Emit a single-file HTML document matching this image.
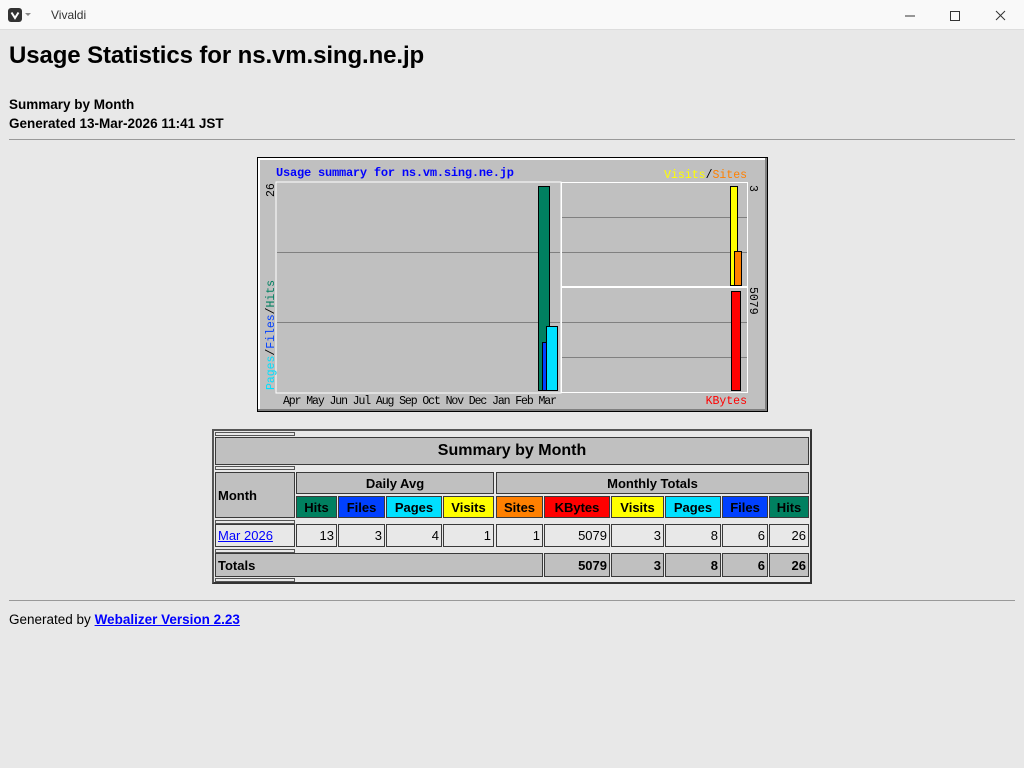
<!DOCTYPE html>
<html><head><meta charset="utf-8"><style>
*{margin:0;padding:0;box-sizing:border-box}
body{width:1024px;height:768px;background:#e8e8e8;position:relative;overflow:hidden;font-family:"Liberation Sans",sans-serif;color:#000}
.a{position:absolute}
.c{position:absolute;border:1px solid #3a3a3a;background:#c0c0c0;font-size:13px;font-weight:bold;display:flex;align-items:center;justify-content:center;white-space:nowrap}
.d{background:#e8e8e8;font-weight:normal;justify-content:flex-end;padding-right:2px}
.t{justify-content:flex-end;padding-right:2px}
.s{position:absolute;border:1px solid #555;background:#e8e8e8;height:4px}
</style></head><body>
<div class="a" style="left:0;top:0;width:1024px;height:30px;background:#f9f9f9;border-bottom:1px solid #ddd"></div>
<div class="a" style="left:8px;top:8px;width:14px;height:14px;background:#333;border-radius:3px"><svg width="14" height="14"><path d="M3.5 4.5 L7 10 L10.5 4.5" stroke="#fff" stroke-width="2" fill="none"/></svg></div>
<div class="a" style="left:25px;top:13px;border-left:3px solid transparent;border-right:3px solid transparent;border-top:3px solid #888"></div>
<div class="a" style="left:51px;top:8px;font-size:12px;color:#333">Vivaldi</div>
<svg class="a" style="left:900px;top:8px" width="110" height="16"><path d="M5 8h10" stroke="#333"/><rect x="50.5" y="3.5" width="9" height="9" fill="none" stroke="#333"/><path d="M96 3l9 9M105 3l-9 9" stroke="#333"/></svg>
<div class="a" style="left:9px;top:42px;font-size:24px;font-weight:bold;letter-spacing:-0.1px">Usage Statistics for ns.vm.sing.ne.jp</div>
<div class="a" style="left:9px;top:95px;font-size:13.5px;font-weight:bold;line-height:19px">Summary by Month<br>Generated 13-Mar-2026 11:41 JST</div>
<div class="a" style="left:9px;top:139px;width:1006px;height:1px;background:#999"></div>

<svg class="a" style="left:257px;top:157px" width="511" height="255" font-family="Liberation Mono,monospace" font-size="11">
<rect x="0" y="0" width="511" height="255" fill="#000"/>
<rect x="1" y="1" width="509" height="253" fill="#808080"/>
<rect x="1" y="1" width="507" height="251" fill="#fff"/>
<rect x="3" y="3" width="505" height="249" fill="#c0c0c0"/>
<rect x="19" y="25" width="285" height="211" fill="#c0c0c0" stroke="#fff" stroke-width="1"/>
<rect x="304.5" y="25.5" width="186" height="104" fill="#c0c0c0" stroke="#fff"/>
<rect x="304.5" y="130.5" width="186" height="105" fill="#c0c0c0" stroke="#fff"/>
<path d="M20 95.5H303M20 165.5H303M305 60.5H490M305 95.5H490M305 165.5H490M305 200.5H490" stroke="#808080"/>
<rect x="281.5" y="29.5" width="11" height="204" fill="#008060" stroke="#000"/>
<rect x="285.5" y="185.5" width="4" height="48" fill="#0040ff" stroke="#000"/>
<rect x="289.5" y="169.5" width="11" height="64" fill="#00e0ff" stroke="#000"/>
<rect x="473.5" y="29.5" width="7" height="99" fill="#ffff00" stroke="#000"/>
<rect x="477.5" y="94.5" width="7" height="34" fill="#ff8000" stroke="#000"/>
<rect x="474.5" y="134.5" width="9" height="99" fill="#ff0000" stroke="#000"/>
<text x="19" y="19" fill="#0000ff" font-weight="bold" font-size="12" textLength="238">Usage summary for ns.vm.sing.ne.jp</text>
<text x="490" y="21" text-anchor="end" font-size="11.5"><tspan fill="#ffff00">Visits</tspan><tspan fill="#000">/</tspan><tspan fill="#ff8000">Sites</tspan></text>
<text x="490" y="247" text-anchor="end" fill="#ff0000" font-size="11.5">KBytes</text>
<text x="26" y="247" font-size="11.5" fill="#000" textLength="274">Apr May Jun Jul Aug Sep Oct Nov Dec Jan Feb Mar</text>
<text transform="translate(17,233) rotate(-90)" font-size="11.5" textLength="110"><tspan fill="#00e0ff">Pages</tspan><tspan fill="#000">/</tspan><tspan fill="#0040ff">Files</tspan><tspan fill="#000">/</tspan><tspan fill="#008060">Hits</tspan></text>
<text transform="translate(17,40) rotate(-90)" font-size="11.5">26</text>
<text transform="translate(493,28) rotate(90)" font-size="11.5">3</text>
<text transform="translate(493,130) rotate(90)" font-size="11.5">5079</text>
</svg>

<div class="a" style="left:212px;top:429px;width:600px;height:155px;border:2px solid #555;border-right-color:#333;border-bottom-color:#333"></div>
<div class="s" style="left:215px;top:432px;width:80px"></div>
<div class="c" style="left:215px;top:437px;width:594px;height:28px;font-size:16px">Summary by Month</div>
<div class="s" style="left:215px;top:466px;width:80px"></div>
<div class="c" style="left:215px;top:472px;width:80px;height:46px;justify-content:flex-start;padding-left:2px">Month</div>
<div class="c" style="left:296px;top:472px;width:198px;height:22px">Daily Avg</div>
<div class="c" style="left:496px;top:472px;width:313px;height:22px">Monthly Totals</div>
<div class="c" style="left:296px;top:496px;width:41px;height:22px;background:#008060">Hits</div>
<div class="c" style="left:338px;top:496px;width:47px;height:22px;background:#0040ff">Files</div>
<div class="c" style="left:386px;top:496px;width:56px;height:22px;background:#00e0ff">Pages</div>
<div class="c" style="left:443px;top:496px;width:51px;height:22px;background:#ffff00">Visits</div>
<div class="c" style="left:496px;top:496px;width:47px;height:22px;background:#ff8000">Sites</div>
<div class="c" style="left:544px;top:496px;width:66px;height:22px;background:#ff0000">KBytes</div>
<div class="c" style="left:611px;top:496px;width:53px;height:22px;background:#ffff00">Visits</div>
<div class="c" style="left:665px;top:496px;width:56px;height:22px;background:#00e0ff">Pages</div>
<div class="c" style="left:722px;top:496px;width:46px;height:22px;background:#0040ff">Files</div>
<div class="c" style="left:769px;top:496px;width:40px;height:22px;background:#008060">Hits</div>
<div class="s" style="left:215px;top:520px;width:80px"></div>
<div class="c d" style="left:215px;top:524px;width:80px;height:23px;justify-content:flex-start;padding-left:2px"><span style="color:#00f;text-decoration:underline">Mar 2026</span></div>
<div class="c d" style="left:296px;top:524px;width:41px;height:23px">13</div>
<div class="c d" style="left:338px;top:524px;width:47px;height:23px">3</div>
<div class="c d" style="left:386px;top:524px;width:56px;height:23px">4</div>
<div class="c d" style="left:443px;top:524px;width:51px;height:23px">1</div>
<div class="c d" style="left:496px;top:524px;width:47px;height:23px">1</div>
<div class="c d" style="left:544px;top:524px;width:66px;height:23px">5079</div>
<div class="c d" style="left:611px;top:524px;width:53px;height:23px">3</div>
<div class="c d" style="left:665px;top:524px;width:56px;height:23px">8</div>
<div class="c d" style="left:722px;top:524px;width:46px;height:23px">6</div>
<div class="c d" style="left:769px;top:524px;width:40px;height:23px">26</div>
<div class="s" style="left:215px;top:549px;width:80px"></div>
<div class="c" style="left:215px;top:553px;width:328px;height:24px;justify-content:flex-start;padding-left:2px">Totals</div>
<div class="c t" style="left:544px;top:553px;width:66px;height:24px">5079</div>
<div class="c t" style="left:611px;top:553px;width:53px;height:24px">3</div>
<div class="c t" style="left:665px;top:553px;width:56px;height:24px">8</div>
<div class="c t" style="left:722px;top:553px;width:46px;height:24px">6</div>
<div class="c t" style="left:769px;top:553px;width:40px;height:24px">26</div>
<div class="s" style="left:215px;top:578px;width:80px"></div>

<div class="a" style="left:9px;top:600px;width:1006px;height:1px;background:#999"></div>
<div class="a" style="left:9px;top:612px;font-size:13.5px">Generated by <b style="color:#00f;text-decoration:underline">Webalizer Version 2.23</b></div>
</body></html>
